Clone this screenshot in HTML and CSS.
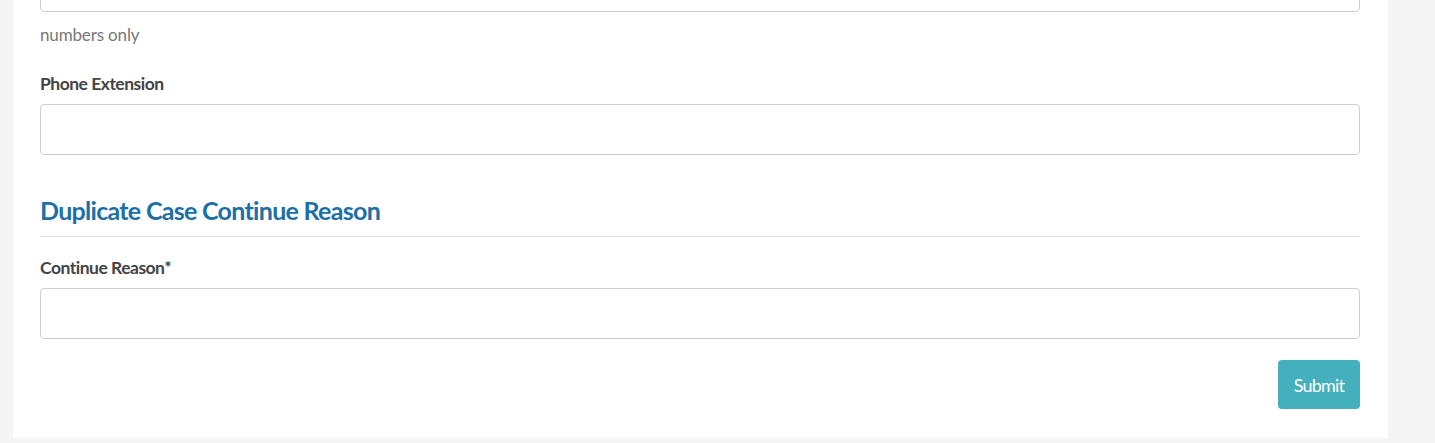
FILE: index.html
```html
<!DOCTYPE html>
<html lang="en">
<head>
<meta charset="utf-8">
<title>Duplicate Case</title>
<link rel="stylesheet" href="styles.css">
</head>
<body>
<div class="page">
  <form class="card">
    <div class="field">
      <input class="input" type="text">
      <div class="help">numbers only</div>
    </div>
    <div class="field">
      <label class="label">Phone Extension</label>
      <input class="input" type="text">
    </div>
    <h2 class="section-title">Duplicate Case Continue Reason</h2>
    <div class="field">
      <label class="label">Continue Reason*</label>
      <input class="input" type="text">
    </div>
    <div class="actions">
      <button class="btn" type="button">Submit</button>
    </div>
  </form>
</div>
</body>
</html>
```
FILE: styles.css
```css
html, body {
  margin: 0;
  padding: 0;
  background: #f5f5f5;
  font-family: Lato, "Open Sans", sans-serif;
}
.page {
  padding-left: 13px;
  width: 1375px;
  margin-top: -39px;
}
.card {
  background: #fff;
  padding: 0 28px 29px 27px;
  display: flex;
  flex-direction: column;
}
.field {
  display: flex;
  flex-direction: column;
}
.input {
  box-sizing: border-box;
  height: 51px;
  width: 100%;
  border: 1px solid #cfcfcf;
  border-radius: 4px;
  background: #fff;
  margin: 0;
}
.help {
  color: #777;
  font-size: 17px;
  letter-spacing: -0.15px;
  line-height: 20px;
  margin-top: 13px;
}
.label {
  color: #444;
  font-weight: 700;
  font-size: 17.5px;
  letter-spacing: -0.5px;
  line-height: 20px;
  margin-top: 29px;
  margin-bottom: 10px;
}
.section-title {
  color: #1d6fa8;
  font-size: 25px;
  font-weight: 700;
  letter-spacing: -0.7px;
  line-height: 30px;
  margin: 40px 0 0;
  padding-bottom: 11px;
  border-bottom: 1px solid #e3e3e3;
}
.section-title + .field .label {
  margin-top: 21px;
}
.actions {
  display: flex;
  justify-content: flex-end;
  margin-top: 21px;
}
.btn {
  background: #44afbd;
  color: #fff;
  border: none;
  border-radius: 4px;
  width: 82px;
  height: 49px;
  font-family: Lato, sans-serif;
  font-size: 18px;
  letter-spacing: -0.8px;
  padding: 0;
}
```
